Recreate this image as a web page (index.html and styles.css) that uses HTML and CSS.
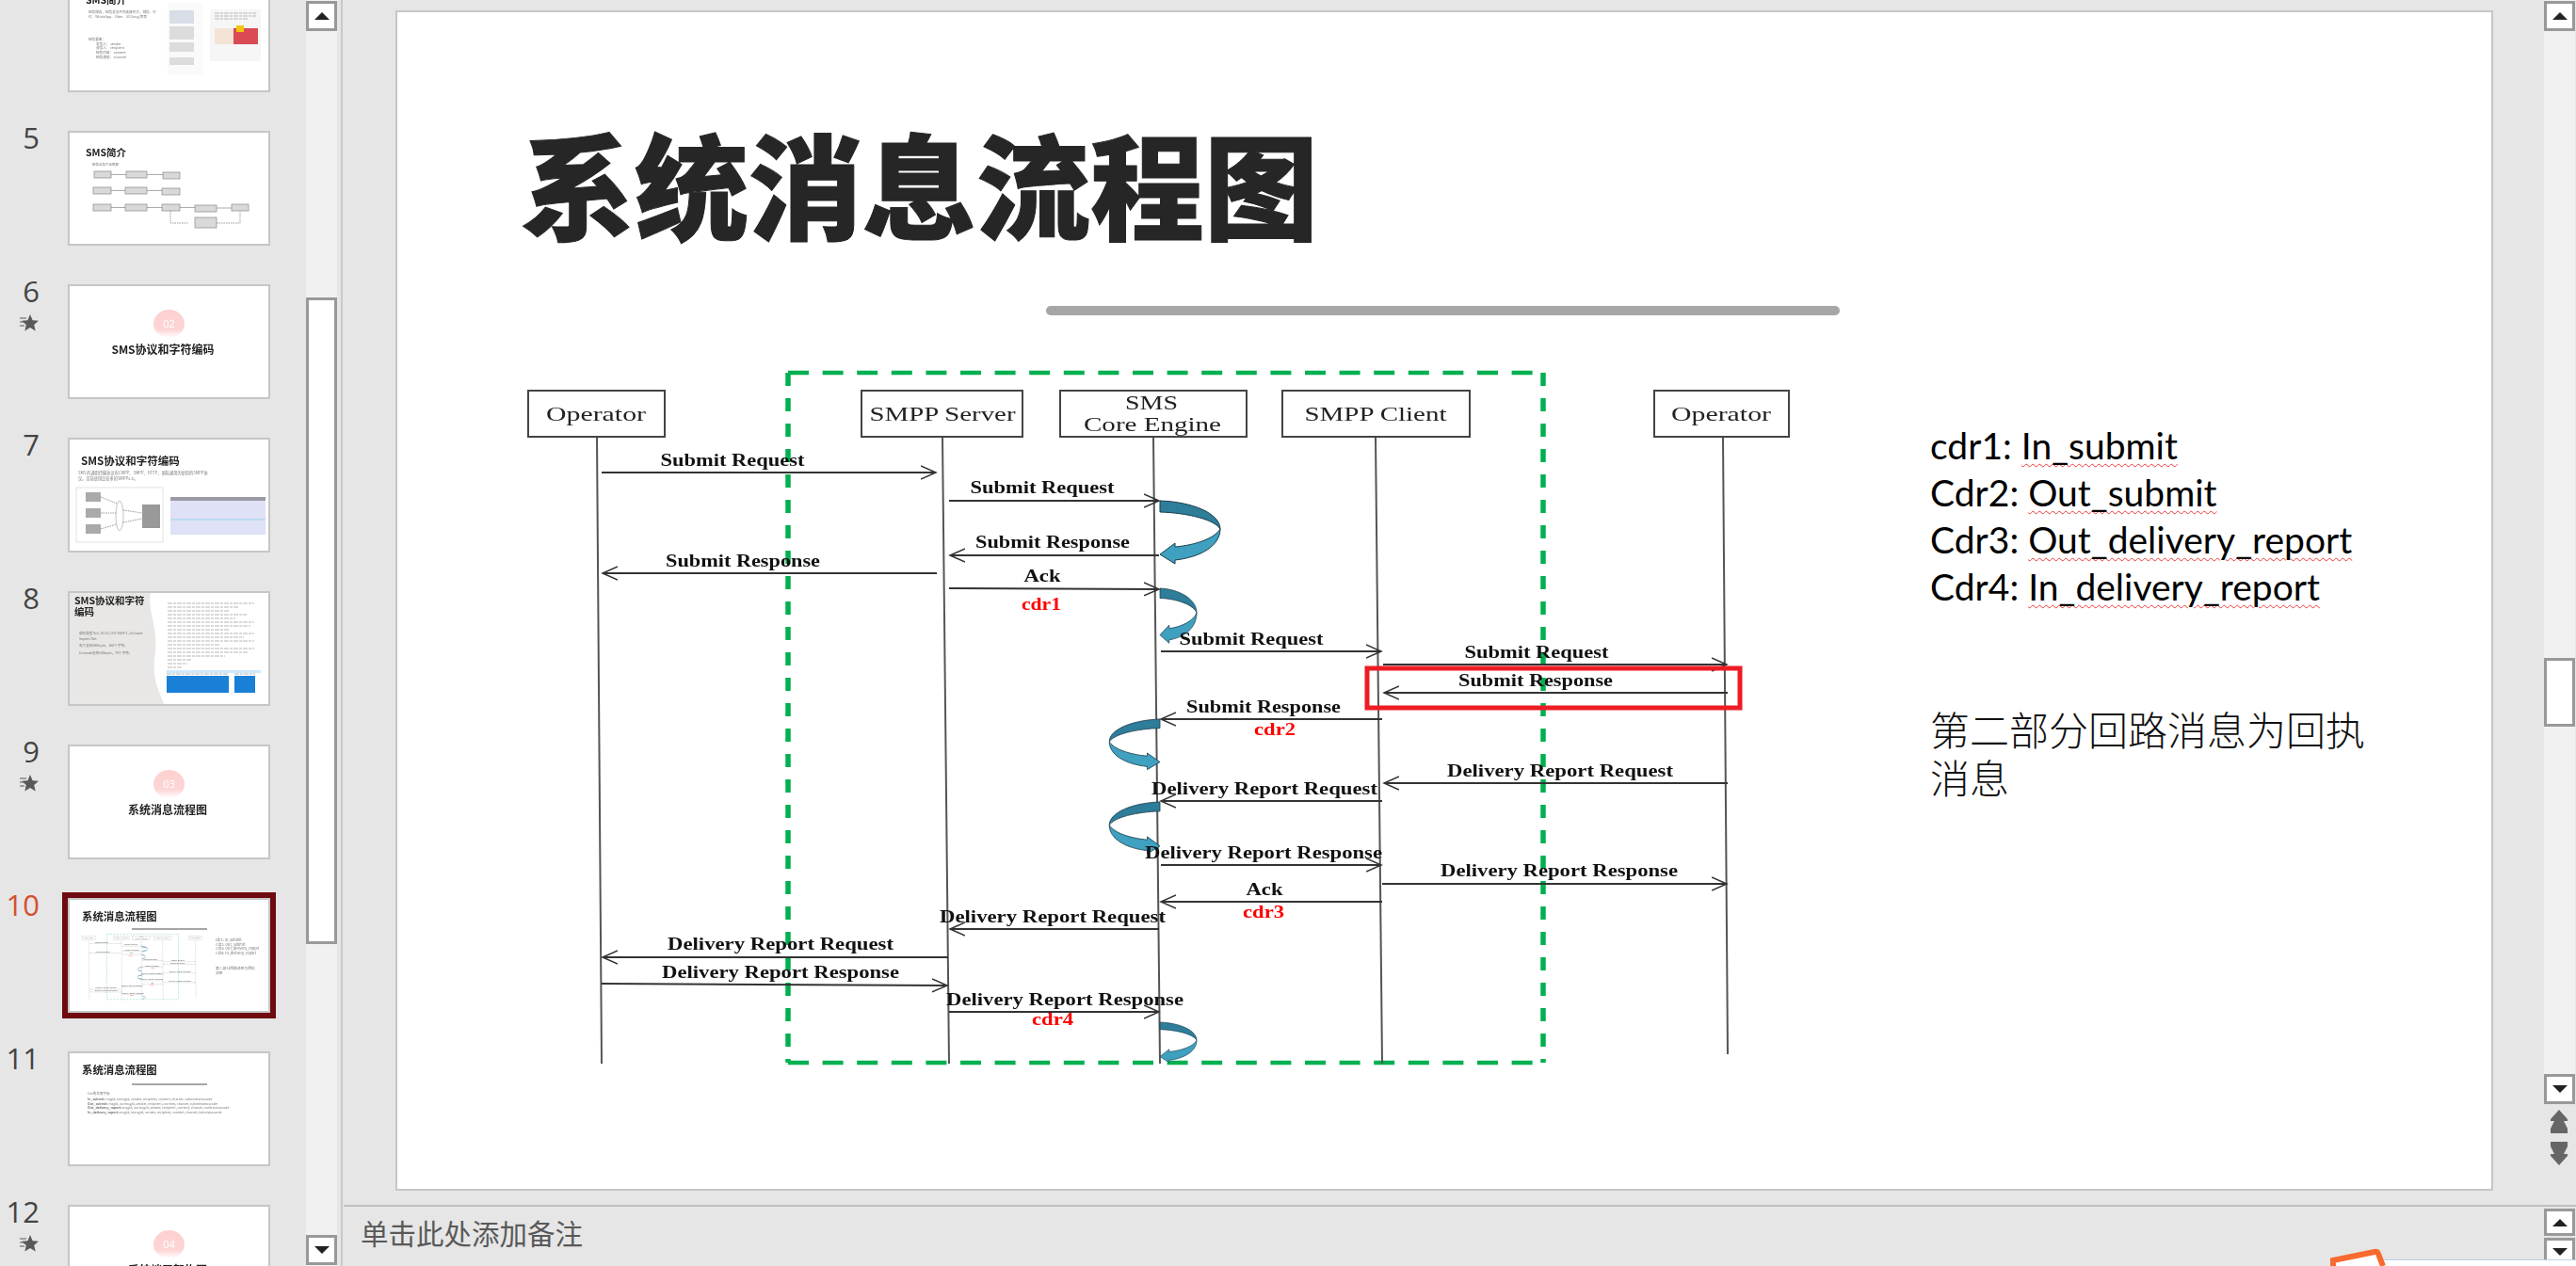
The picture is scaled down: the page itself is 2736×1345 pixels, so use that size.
FILE: index.html
```html
<!DOCTYPE html>
<html>
<head>
	<title>系统消息流程图</title>
	<link rel="stylesheet" href="styles.css">
</head>
<body>

<svg class="defs" width="0" height="0">
	<defs>
		<marker id="head" markerUnits="userSpaceOnUse" markerWidth="18" markerHeight="16" refX="16" refY="8" orient="auto">
			<path d="M0 1 L16 8 L0 15" fill="none" stroke="#333" stroke-width="1.5"/>
		</marker>
		<linearGradient id="pill" x1="0" y1="0" x2="0" y2="1">
			<stop offset="0" stop-color="#fdd0d0"/>
			<stop offset=".7" stop-color="#fdd5d5"/>
			<stop offset="1" stop-color="#fff"/>
		</linearGradient>
		<!-- curved self-call arrow, 64 x 67 -->
		<g id="curl" stroke="#1c3f4d" stroke-width="1">
			<path fill="#2e7d99" d="M0 0 C33 1 64 13 64 30 C58 20 30 13 0 12 Z"/>
			<path fill="#3fa0c0" d="M64 30 C64 48 43 60 16 63 L16 67 L0 57 L16 45 L16 49 C38 47 58 40 64 30 Z"/>
		</g>
		<g id="star">
			<path fill="#595959" d="M11 0 L13.6 6.2 L20 6.8 L15.2 11 L16.7 17.5 L11 14 L5.3 17.5 L6.8 11 L2 6.8 L8.4 6.2 Z"/>
			<path stroke="#595959" stroke-width="1.2" d="M0 4 H7 M0 8 H5 M0 12 H5"/>
		</g>
	</defs>
</svg>

<div class="sidebar">
	<div class="thumb-list">

		<div class="thumb-row">
			<div class="num-col"></div>
			<div class="thumb">
				<svg class="mini" viewBox="0 0 211 118">
					<text class="t-title" x="17" y="26" font-size="10.500">SMS简介</text>
					<text class="t-body" x="20" y="36" font-size="3.600">短信服务，短信发送不同连接形式，微信、钉</text>
					<text class="t-body" x="20" y="41" font-size="3.600">钉、WhatsApp、Viber、SCGmsg 等等</text>
					<text class="t-body" x="20" y="65" font-size="3.600">短信要素：</text>
					<text class="t-body" x="28" y="70" font-size="3.600">发信人： sender</text>
					<text class="t-body" x="28" y="74" font-size="3.600">收信人： recipient</text>
					<text class="t-body" x="28" y="79" font-size="3.600">短信内容： content</text>
					<text class="t-body" x="28" y="84" font-size="3.600">短信通道： channel</text>
					<rect x="104" y="25" width="37" height="76" fill="#fafafa"/>
					<rect x="106" y="33" width="26" height="14" fill="#d8dde6"/>
					<rect x="106" y="50" width="26" height="14" fill="#dcdcdc"/>
					<rect x="106" y="67" width="26" height="10" fill="#dcdcdc"/>
					<rect x="106" y="83" width="26" height="8" fill="#dcdcdc"/>
					<rect x="149" y="32" width="54" height="55" fill="#f6f6f6"/>
					<path class="t-code" d="M154 36 H198 M154 39 H198 M154 42 H190"/>
					<rect x="154" y="52" width="20" height="17" fill="#f3e4d6"/>
					<rect x="174" y="52" width="26" height="17" fill="#d94a55"/>
					<rect x="177" y="49" width="8" height="7" fill="#f2c511"/>
				</svg>
			</div>
		</div>

		<div class="thumb-row">
			<div class="num-col"><div class="num">5</div></div>
			<div class="thumb">
				<svg class="mini" viewBox="0 0 211 118">
					<text class="t-title" x="17" y="25" font-size="10.500">SMS简介</text>
					<text class="t-body" x="24" y="35" font-size="3.500">短信业务产品框架</text>
					<path class="t-links" d="M44 44.500 H60 M82 44.500 H99 M44 61.500 H59 M82 61.500 H98 M44 79.500 H59 M82 79.500 H98 M117 79.500 H133 M156 80 H172"/>
					<path class="t-dash" d="M107 83 V96 H126 M156 96 H181 V84"/>
					<g class="t-boxes">
						<rect x="26" y="41" width="18" height="7"/><rect x="60" y="41" width="22" height="7"/><rect x="99" y="42" width="18" height="7"/>
						<rect x="25" y="58" width="19" height="7"/><rect x="59" y="58" width="23" height="7"/><rect x="98" y="59" width="19" height="7"/>
						<rect x="25" y="76" width="19" height="7"/><rect x="59" y="76" width="23" height="7"/><rect x="98" y="76" width="19" height="7"/>
						<rect x="133" y="77" width="23" height="7"/><rect x="172" y="76" width="18" height="7"/>
						<rect x="133" y="90" width="23" height="11"/>
					</g>
				</svg>
			</div>
		</div>

		<div class="thumb-row">
			<div class="num-col"><div class="num">6</div><svg class="star" viewBox="0 0 20 18"><use href="#star"/></svg></div>
			<div class="thumb">
				<svg class="mini" viewBox="0 0 211 118">
					<ellipse cx="105.500" cy="40" rx="16.500" ry="15" fill="url(#pill)"/>
					<text class="t-pill" x="105.500" y="44" font-size="11">02</text>
					<text class="t-title t-mid" x="99" y="72" font-size="12">SMS协议和字符编码</text>
				</svg>
			</div>
		</div>

		<div class="thumb-row">
			<div class="num-col"><div class="num">7</div></div>
			<div class="thumb">
				<svg class="mini" viewBox="0 0 211 118">
					<text class="t-title" x="12" y="27" font-size="11.500">SMS协议和字符编码</text>
					<text class="t-body" x="9" y="37" font-size="4.200">SMS 的通用传输协议有CMPP、SMPP、HTTP、国际通用的使用的SMPP协</text>
					<text class="t-body" x="9" y="43" font-size="4.200">议。目前使用比较多的SMPP3.4。</text>
					<rect x="7" y="51" width="92" height="58" fill="#fff" stroke="#ccc" stroke-width=".6"/>
					<rect x="17" y="56" width="16" height="10" fill="#aaa"/>
					<rect x="17" y="73" width="16" height="10" fill="#aaa"/>
					<rect x="17" y="90" width="16" height="10" fill="#aaa"/>
					<rect x="77" y="69" width="19" height="25" fill="#999"/>
					<ellipse cx="53" cy="81" rx="4" ry="16" fill="none" stroke="#999" stroke-width=".6"/>
					<path class="t-dash" d="M33 61 L50 68 M33 78 H50 M33 95 L50 90 M57 75 L77 78 M57 88 L77 84"/>
					<rect x="107" y="61" width="101" height="40" fill="#dfe1f7"/>
					<rect x="107" y="61" width="101" height="4" fill="#9a9aa6"/>
					<rect x="107" y="84" width="101" height="2" fill="#bcdcf5"/>
				</svg>
			</div>
		</div>

		<div class="thumb-row">
			<div class="num-col"><div class="num">8</div></div>
			<div class="thumb">
				<svg class="mini" viewBox="0 0 211 118">
					<path d="M0 0 H86 C82 20 96 40 90 70 C88 95 96 105 100 118 H0 Z" fill="#e8e7e5"/>
					<text class="t-title" x="5" y="12" font-size="10.500">SMS协议和字符</text>
					<text class="t-title" x="5" y="24" font-size="10.500">编码</text>
					<text class="t-body" x="10" y="44" font-size="3.600">编码类型7bit, UCS2, ISO-8859-1, Unicode</text>
					<text class="t-body" x="10" y="50" font-size="3.600">Septet:7bit</text>
					<text class="t-body" x="10" y="57" font-size="3.600">英文支持160byte，160个字符。</text>
					<text class="t-body" x="10" y="65" font-size="3.600">Unicode支持140byte，70个字符。</text>
					<path class="t-code" d="M104 11 H196 M104 15 H180 M104 19 H170 M104 23 H188 M104 27 H176 M104 31 H196 M104 35 H192 M104 39 H170 M104 43 H196 M104 47 H185 M104 51 H196 M104 55 H160 M104 59 H196 M104 63 H190 M104 67 H165 M104 71 H130 M104 75 H125 M104 79 H120"/>
					<rect x="103" y="82" width="100" height="3" fill="#cfe8fb"/>
					<path class="t-code" d="M103 86 H169 M175 86 H197"/>
					<rect x="103" y="88" width="66" height="18" fill="#1a7fd6"/>
					<rect x="175" y="88" width="22" height="18" fill="#1a7fd6"/>
				</svg>
			</div>
		</div>

		<div class="thumb-row">
			<div class="num-col"><div class="num">9</div><svg class="star" viewBox="0 0 20 18"><use href="#star"/></svg></div>
			<div class="thumb">
				<svg class="mini" viewBox="0 0 211 118">
					<ellipse cx="105.500" cy="40" rx="16.500" ry="15" fill="url(#pill)"/>
					<text class="t-pill" x="105.500" y="44" font-size="11">03</text>
					<text class="t-title t-mid" x="104" y="72" font-size="12">系统消息流程图</text>
				</svg>
			</div>
		</div>

		<div class="thumb-row">
			<div class="num-col"><div class="num num-active">10</div></div>
			<div class="thumb thumb-active">
				<svg class="mini" viewBox="0 0 211 118">
					<text class="t-title" x="13" y="22" font-size="11.400">系统消息流程图</text>
					<rect x="66" y="30" width="80" height="2" fill="#a6a6a6"/>
					<use class="mini-seq" href="#seq" transform="scale(.0947) translate(-420,-12)"/>
					<text class="t-body" x="155" y="44" font-size="3.800">cdr1: In_submit</text>
					<text class="t-body" x="155" y="49" font-size="3.800">Cdr2: Out_submit</text>
					<text class="t-body" x="155" y="53" font-size="3.800">Cdr3: Out_delivery_report</text>
					<text class="t-body" x="155" y="58" font-size="3.800">Cdr4: In_delivery_report</text>
					<text class="t-body" x="155" y="74" font-size="3.800">第二部分回路消息为回执</text>
					<text class="t-body" x="155" y="79" font-size="3.800">消息</text>
				</svg>
			</div>
		</div>

		<div class="thumb-row">
			<div class="num-col"><div class="num">11</div></div>
			<div class="thumb">
				<svg class="mini" viewBox="0 0 211 118">
					<text class="t-title" x="13" y="22" font-size="11.400">系统消息流程图</text>
					<rect x="66" y="32" width="80" height="2" fill="#a6a6a6"/>
					<text class="t-body" x="19" y="44" font-size="3.500">Cdr的关键字段:</text>
					<text class="t-body" x="19" y="50" font-size="3.500"><tspan font-weight="700">In_submit:</tspan> msgid, inmsgid, sender, recipient, content, charset, submitstatuscode</text>
					<text class="t-body" x="19" y="55" font-size="3.500"><tspan font-weight="700">Out_submit:</tspan> msgid, outmsgid, sender, recipient, content, charset, submitstatuscode</text>
					<text class="t-body" x="19" y="59" font-size="3.500"><tspan font-weight="700">Out_delivery_report:</tspan> msgid, outmsgid, sender, recipient, content, charset, outdrstatuscode</text>
					<text class="t-body" x="19" y="64" font-size="3.500"><tspan font-weight="700">In_delivery_report:</tspan> msgid, inmsgid, sender, recipient, content, charset, indrstatuscode</text>
				</svg>
			</div>
		</div>

		<div class="thumb-row">
			<div class="num-col"><div class="num">12</div><svg class="star" viewBox="0 0 20 18"><use href="#star"/></svg></div>
			<div class="thumb">
				<svg class="mini" viewBox="0 0 211 118">
					<ellipse cx="105.500" cy="40" rx="16.500" ry="15" fill="url(#pill)"/>
					<text class="t-pill" x="105.500" y="44" font-size="11">04</text>
					<text class="t-title t-mid" x="104" y="72" font-size="12">系统端口架构图</text>
				</svg>
			</div>
		</div>

	</div>
</div>

<div class="vbar vbar-side">
	<div class="sb-btn"><span class="tri-up"></span></div>
	<div class="sb-thumb sb-thumb-side"></div>
	<div class="sb-btn sb-end"><span class="tri-down"></span></div>
</div>

<div class="editor">
	<div class="stage">
		<div class="canvas">
			<div class="slide">
				<h1 class="slide-title">系统消息流程图</h1>
				<div class="slide-rule"></div>

				<svg class="seq" viewBox="540 390 1380 750">
					<g id="seq">
						<!-- green group around the platform -->
						<path class="green-h" d="M837 396 H1639 M837 1129 H1639"/>
						<path class="green-v" d="M837 396 V1129 M1639 396 V1129"/>

						<path class="life" d="M634 464 L639 1130 M1001 464 L1008 1130 M1225 464 L1232 1130 M1461 464 L1468 1130 M1830 464 L1835 1120"/>

						<rect class="actor" x="561" y="415" width="145" height="49"/>
						<rect class="actor" x="915" y="415" width="171" height="49"/>
						<rect class="actor" x="1126" y="415" width="198" height="49"/>
						<rect class="actor" x="1362" y="415" width="199" height="49"/>
						<rect class="actor" x="1757" y="415" width="143" height="49"/>

						<text class="actor-name" x="633" y="447" textLength="106" lengthAdjust="spacingAndGlyphs">Operator</text>
						<text class="actor-name" x="1001" y="447" textLength="155" lengthAdjust="spacingAndGlyphs">SMPP Server</text>
						<text class="actor-name" x="1223" y="435" textLength="56" lengthAdjust="spacingAndGlyphs">SMS</text>
						<text class="actor-name" x="1224" y="458" textLength="146" lengthAdjust="spacingAndGlyphs">Core Engine</text>
						<text class="actor-name" x="1461" y="447" textLength="151" lengthAdjust="spacingAndGlyphs">SMPP Client</text>
						<text class="actor-name" x="1828" y="447" textLength="106" lengthAdjust="spacingAndGlyphs">Operator</text>

						<use href="#curl" transform="translate(1232,532)"/>
						<use href="#curl" transform="translate(1232,625) scale(.61,.87)"/>
						<use href="#curl" transform="translate(1232,764) scale(-.84,.8)"/>
						<use href="#curl" transform="translate(1232,852) scale(-.84,.82)"/>
						<use href="#curl" transform="translate(1232,1086) scale(.61,.64)"/>

						<g class="msgs">
							<path d="M639 502 H994"/>
							<path d="M1008 532 H1231"/>
							<path d="M1231 590 H1009"/>
							<path d="M995 609 H640"/>
							<path d="M1008 625 L1231 626"/>
							<path d="M1233 692 H1467"/>
							<path d="M1469 706 H1834"/>
							<path d="M1835 736 H1470"/>
							<path d="M1468 764 H1233"/>
							<path d="M1835 832 H1470"/>
							<path d="M1468 851 H1233"/>
							<path d="M1233 919 H1467"/>
							<path d="M1468 939 H1834"/>
							<path d="M1468 958 H1233"/>
							<path d="M1231 987 H1009"/>
							<path d="M1007 1017 H640"/>
							<path d="M639 1045 L1006 1047"/>
							<path d="M1008 1075 H1231"/>
						</g>

						<g class="labels">
							<text x="778" y="495" textLength="153" lengthAdjust="spacingAndGlyphs">Submit Request</text>
							<text x="1107" y="524" textLength="153" lengthAdjust="spacingAndGlyphs">Submit Request</text>
							<text x="1118" y="582" textLength="164" lengthAdjust="spacingAndGlyphs">Submit Response</text>
							<text x="789" y="602" textLength="164" lengthAdjust="spacingAndGlyphs">Submit Response</text>
							<text x="1107" y="618" textLength="39" lengthAdjust="spacingAndGlyphs">Ack</text>
							<text class="cdr" x="1106" y="648" textLength="42" lengthAdjust="spacingAndGlyphs">cdr1</text>
							<text x="1329" y="685" textLength="153" lengthAdjust="spacingAndGlyphs">Submit Request</text>
							<text x="1632" y="699" textLength="153" lengthAdjust="spacingAndGlyphs">Submit Request</text>
							<text x="1631" y="729" textLength="164" lengthAdjust="spacingAndGlyphs">Submit Response</text>
							<text x="1342" y="757" textLength="164" lengthAdjust="spacingAndGlyphs">Submit Response</text>
							<text class="cdr" x="1354" y="781" textLength="44" lengthAdjust="spacingAndGlyphs">cdr2</text>
							<text x="1657" y="825" textLength="240" lengthAdjust="spacingAndGlyphs">Delivery Report Request</text>
							<text x="1343" y="844" textLength="240" lengthAdjust="spacingAndGlyphs">Delivery Report Request</text>
							<text x="1342" y="912" textLength="252" lengthAdjust="spacingAndGlyphs">Delivery Report Response</text>
							<text x="1656" y="931" textLength="252" lengthAdjust="spacingAndGlyphs">Delivery Report Response</text>
							<text x="1343" y="951" textLength="39" lengthAdjust="spacingAndGlyphs">Ack</text>
							<text class="cdr" x="1342" y="975" textLength="44" lengthAdjust="spacingAndGlyphs">cdr3</text>
							<text x="1118" y="980" textLength="240" lengthAdjust="spacingAndGlyphs">Delivery Report Request</text>
							<text x="829" y="1009" textLength="240" lengthAdjust="spacingAndGlyphs">Delivery Report Request</text>
							<text x="829" y="1039" textLength="252" lengthAdjust="spacingAndGlyphs">Delivery Report Response</text>
							<text x="1131" y="1068" textLength="252" lengthAdjust="spacingAndGlyphs">Delivery Report Response</text>
							<text class="cdr" x="1118" y="1089" textLength="44" lengthAdjust="spacingAndGlyphs">cdr4</text>
						</g>
					</g>
					<rect class="red-box" x="1452" y="710" width="396" height="42"/>
				</svg>

				<div class="cdr-list">
					<div>cdr1: <span class="typo">In_submit</span></div>
					<div>Cdr2: <span class="typo">Out_submit</span></div>
					<div>Cdr3: <span class="typo">Out_delivery_report</span></div>
					<div>Cdr4: <span class="typo">In_delivery_report</span></div>
				</div>
				<div class="reply-note">第二部分回路消息为回执消息</div>
			</div>
		</div>

		<div class="right-col">
			<div class="vbar vbar-main">
				<div class="sb-btn"><span class="tri-up"></span></div>
				<div class="sb-thumb sb-thumb-main"></div>
				<div class="sb-btn sb-end"><span class="tri-down"></span></div>
			</div>
			<svg class="page-nav" viewBox="0 0 20 60">
				<path d="M10 0 L19 10 V12 H15 L19 20 V25 H1 V20 L5 12 H1 V10 Z"/>
				<path d="M1 34 H19 V39 L15 47 H19 V49 L10 59 L1 49 V47 H5 L1 39 Z"/>
			</svg>
		</div>
	</div>

	<div class="notes">
		<div class="notes-text">单击此处添加备注</div>
		<div class="notes-bar">
			<div class="sb-btn sb-btn-notes"><span class="tri-up"></span></div>
			<div class="sb-btn sb-btn-notes"><span class="tri-down"></span></div>
		</div>
	</div>
</div>

<!-- corner of another window lying over the notes pane -->
<div class="float-win"></div>
<svg class="float-tag" viewBox="0 0 60 20">
	<path d="M3 20 V14 L47 5 Q50 4 51 7 L56 20" fill="#fff" stroke="#f96a2f" stroke-width="6"/>
</svg>

</body>
</html>
```

FILE: styles.css
```css
html, body {
	margin: 0;
	height: 100%;
	overflow: hidden;
}

body {
	display: flex;
	width: 2736px;
	height: 1345px;
	background-color: #e6e6e6;
	font-family: "Noto Sans CJK SC", "Noto Sans", sans-serif;
}

.defs {
	position: absolute;
}

/* slide list */

.sidebar {
	width: 325px;
	height: 1345px;
	overflow: hidden;
	flex: none;
}

.thumb-list {
	margin-top: -24px;
}

.thumb-row {
	display: flex;
	height: 163px;
}

.num-col {
	width: 41px;
	margin-right: 31px;
	display: flex;
	flex-direction: column;
	align-items: flex-end;
}

.num {
	font-family: "Open Sans", sans-serif;
	font-size: 31px;
	line-height: 31px;
	margin-top: -8px;
	margin-right: -1px;
	color: #444;
}

.num-active {
	color: #d5502f;
}

.star {
	width: 20px;
	height: 18px;
	margin-top: 9px;
}

.thumb {
	width: 211px;
	height: 118px;
	border: 2px solid #c6c6c6;
	background-color: #fff;
	flex: none;
}

.thumb-active {
	outline: 6px solid #6f0a10;
}

.mini {
	display: block;
	width: 211px;
	height: 118px;
	filter: blur(.35px);
}

.mini-seq {
	opacity: .6;
}

.t-title {
	font-weight: 700;
	fill: #222;
}

.t-mid {
	text-anchor: middle;
}

.t-body {
	fill: #777;
}

.t-pill {
	fill: #fff;
	text-anchor: middle;
	font-family: "Open Sans", sans-serif;
}

.t-boxes rect {
	fill: #d9d9d9;
	stroke: #888;
	stroke-width: .7;
}

.t-links {
	fill: none;
	stroke: #888;
	stroke-width: .7;
}

.t-dash {
	fill: none;
	stroke: #999;
	stroke-width: 1;
	stroke-dasharray: 1.5 1;
}

.t-code {
	fill: none;
	stroke: #b5b5b5;
	stroke-width: 1.1;
	stroke-dasharray: 5 1 3 1;
}

/* scrollbars */

.vbar {
	width: 33px;
	background-color: #f1f1f1;
	display: flex;
	flex-direction: column;
	padding-top: 1px;
	box-sizing: border-box;
}

.vbar-side {
	height: 1345px;
	padding-bottom: 1px;
	flex: none;
}

.vbar-main {
	height: 1173px;
}

.sb-btn {
	height: 32px;
	box-sizing: border-box;
	border: 3px solid #999;
	background-color: #fff;
	display: flex;
	align-items: center;
	justify-content: center;
	flex: none;
}

.sb-end {
	margin-top: auto;
}

.sb-thumb {
	box-sizing: border-box;
	border: 3px solid #999;
	background-color: #fff;
}

.sb-thumb-side {
	height: 687px;
	margin-top: 283px;
}

.sb-thumb-main {
	height: 73px;
	margin-top: 666px;
}

.tri-up, .tri-down {
	width: 0;
	height: 0;
	border-left: 8px solid transparent;
	border-right: 8px solid transparent;
}

.tri-up {
	border-bottom: 8px solid #222;
}

.tri-down {
	border-top: 8px solid #222;
}

/* editor */

.editor {
	flex: 1;
	display: flex;
	flex-direction: column;
	margin-left: 4px;
	padding-left: 1px;
	border-left: 2px solid #c8c8c8;
	box-sizing: border-box;
	min-width: 0;
}

.stage {
	height: 1280px;
	display: flex;
	flex: none;
}

.canvas {
	flex: 1;
	padding: 11px 53px 0 55px;
}

.slide {
	position: relative;
	width: 2228px;
	height: 1254px;
	box-sizing: border-box;
	background-color: #fff;
	border: 2px solid #c6c6c6;
	overflow: hidden;
}

.slide-title {
	position: absolute;
	left: 131px;
	top: 90px;
	margin: 0;
	font-size: 121px;
	line-height: 180px;
	font-weight: 900;
	color: #262626;
	-webkit-text-stroke: 1px #262626;
	white-space: nowrap;
}

.slide-rule {
	position: absolute;
	left: 689px;
	top: 312px;
	width: 843px;
	height: 10px;
	border-radius: 5px;
	background-color: #a6a6a6;
}

.seq {
	position: absolute;
	left: 118px;
	top: 377px;
	width: 1380px;
	height: 750px;
	filter: blur(.4px);
}

.green-h, .green-v {
	fill: none;
	stroke: #00b050;
}

.green-h {
	stroke-width: 4.500;
	stroke-dasharray: 22 14.600;
}

.green-v {
	stroke-width: 5.500;
	stroke-dasharray: 14 13;
}

.life {
	fill: none;
	stroke: #555;
	stroke-width: 2;
}

.actor {
	fill: #fff;
	stroke: #444;
	stroke-width: 2;
}

.actor-name {
	font-family: "Liberation Serif", serif;
	font-size: 21px;
	fill: #222;
	text-anchor: middle;
}

.msgs path {
	fill: none;
	stroke: #333;
	stroke-width: 2;
	marker-end: url(#head);
}

.labels text {
	font-family: "Liberation Serif", serif;
	font-weight: 700;
	font-size: 18px;
	fill: #111;
	text-anchor: middle;
}

.labels .cdr {
	fill: #f00;
}

.red-box {
	fill: none;
	stroke: #ed1c24;
	stroke-width: 5;
}

.cdr-list {
	position: absolute;
	left: 1628px;
	top: 435px;
	font-family: Lato, sans-serif;
	font-size: 39px;
	line-height: 50px;
	color: #000;
	white-space: nowrap;
}

.typo {
	text-decoration: underline wavy #f03a3a 1px;
	text-underline-offset: 4px;
}

.reply-note {
	position: absolute;
	left: 1628px;
	top: 735px;
	width: 480px;
	font-size: 42px;
	line-height: 51px;
	font-weight: 300;
	color: #111;
}

/* right column */

.right-col {
	width: 34px;
	flex: none;
}

.page-nav {
	display: block;
	width: 20px;
	height: 60px;
	margin: 6px 0 0 6px;
	fill: #666;
}

/* notes */

.notes {
	flex: 1;
	display: flex;
	justify-content: space-between;
	border-top: 2px solid #bfbfbf;
}

.notes-text {
	margin-left: 18px;
	margin-top: 5px;
	font-size: 29.500px;
	line-height: 44px;
	color: #595959;
}

.notes-bar {
	width: 34px;
	padding-top: 2px;
}

.sb-btn-notes {
	width: 33px;
	height: 29px;
	margin-bottom: 2px;
}

/* other window */

.float-win {
	position: absolute;
	left: 2530px;
	top: 1338px;
	width: 206px;
	height: 7px;
	background-color: #fff;
	border-top: 1px solid #bcd0e8;
}

.float-tag {
	position: absolute;
	left: 2475px;
	top: 1325px;
	width: 60px;
	height: 20px;
}
```
